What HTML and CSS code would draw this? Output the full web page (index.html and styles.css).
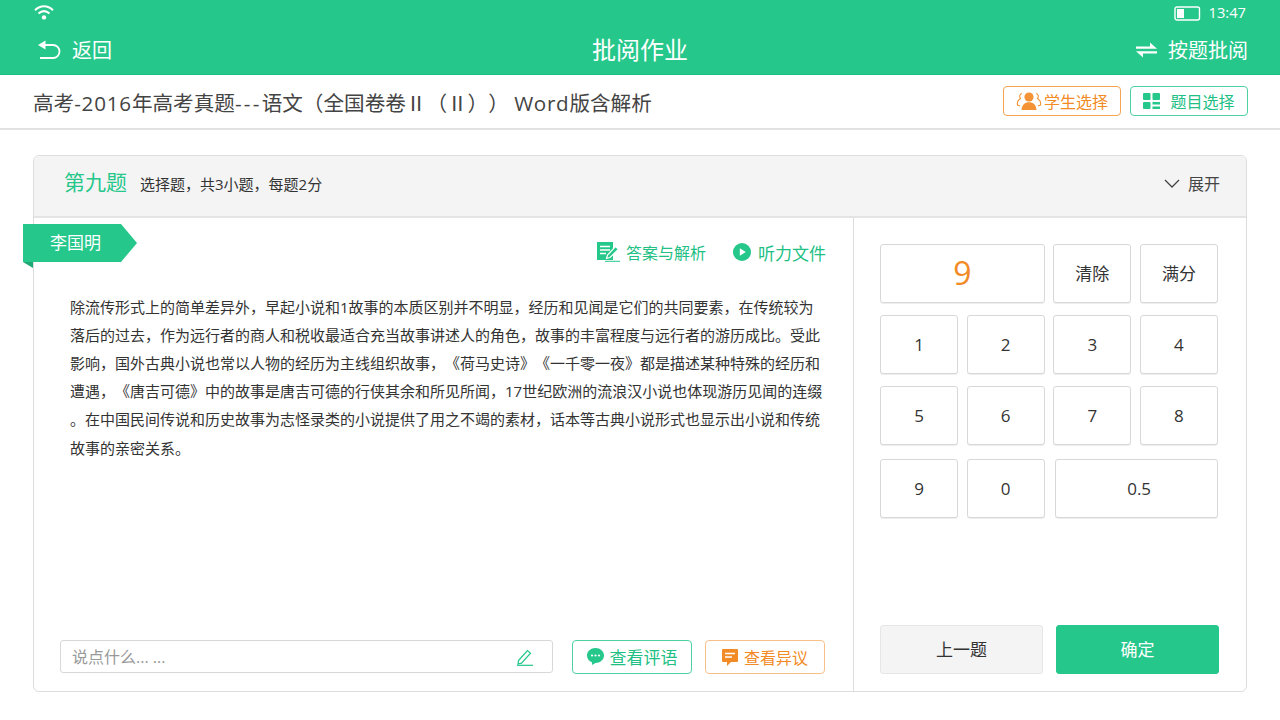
FILE: index.html
```html
<!DOCTYPE html>
<html lang="zh-CN">
<head>
<meta charset="utf-8">
<title>批阅作业</title>
<link rel="stylesheet" href="styles.css">
</head>
<body>
<header class="topbar">
  <div class="status">
    <svg class="wifi" viewBox="0 0 22 16" width="22" height="16"><path d="M2 6.200C7.500 1 14.500 1 20 6.200" fill="none" stroke="#fff" stroke-width="2"/><path d="M5.500 9.600C9 6.400 13 6.400 16.500 9.600" fill="none" stroke="#fff" stroke-width="2"/><circle cx="11" cy="13.400" r="2.200" fill="#fff"/></svg>
    <div class="status-right">
      <svg viewBox="0 0 27 15" width="27" height="15"><rect x="1" y="1" width="24.500" height="13" rx="2" fill="none" stroke="#fff" stroke-width="1.400"/><rect x="3" y="3" width="7" height="9" fill="#fff"/></svg>
      <span class="time">13:47</span>
    </div>
  </div>
  <div class="navrow">
    <div class="nav-left">
      <svg viewBox="0 0 24 19" width="24" height="19"><path d="M0 5 7.500.500v9z" fill="#fff"/><path d="M7 5h8a6.500 6.500 0 0 1 0 13H2" fill="none" stroke="#fff" stroke-width="1.800"/></svg>
      <span>返回</span>
    </div>
    <div class="nav-title">批阅作业</div>
    <div class="nav-right">
      <svg viewBox="0 0 21 16" width="21" height="16"><path d="M0 4.500h14V.500l7 6.300H0z" fill="#fff"/><path d="M21 9.200H0l7 6.300v-4h14z" fill="#fff"/></svg>
      <span>按题批阅</span>
    </div>
  </div>
</header>

<div class="subbar">
  <h1 class="paper">高考<span class="lat">-2016</span>年高考真题<span class="dash">---</span>语文（全国卷卷<span class="roman">Ⅱ</span>（<span class="roman">Ⅱ</span>）） <span class="word">Word</span>版含解析</h1>
  <div class="sub-actions">
    <button class="chip chip-orange">
      <svg viewBox="0 0 26 20" width="26" height="20"><circle cx="13" cy="6" r="4.600" fill="#f39336"/><path d="M5.500 19c.4-5.500 3.500-7.800 7.500-7.800s7.100 2.300 7.500 7.800z" fill="#f39336"/><path d="M6 2.500C3.500 3 3 6 4.500 7.500 2 9 1 11.500 1.500 14l2.500 1M20 2.500c2.500.5 3 3.500 1.500 5 2.500 1.500 3.500 4 3 6.500l-2.500 1" fill="none" stroke="#f39336" stroke-width="1.100"/></svg>
      <span>学生选择</span>
    </button>
    <button class="chip chip-green">
      <svg viewBox="0 0 17 16" width="17" height="16"><rect width="7.500" height="7" rx="1" fill="#25c78b"/><rect x="9.500" width="7.500" height="7" rx="1" fill="#25c78b"/><rect y="9" width="7.500" height="7" rx="1" fill="#25c78b"/><rect x="9.500" y="9" width="7.500" height="2.500" fill="#25c78b"/><rect x="9.500" y="13.500" width="7.500" height="2.500" fill="#25c78b"/></svg>
      <span>题目选择</span>
    </button>
  </div>
</div>

<main class="page">
  <section class="card">
    <div class="card-head">
      <strong class="q-no">第九题</strong>
      <span class="q-desc">选择题，共3小题，每题2分</span>
      <span class="expand">
        <svg viewBox="0 0 16 9" width="16" height="9"><path d="M1 1l7 7 7-7" fill="none" stroke="#444" stroke-width="1.300"/></svg>
        展开
      </span>
    </div>
    <div class="card-body">
      <div class="answer">
        <div class="ribbon">李国明</div>
        <div class="links">
          <a class="link link-doc">
            <svg viewBox="0 0 23 20" width="23" height="20"><path d="M0 0h16v18H0z" fill="#25c78b"/><path d="M3 4.500h10M3 8h10M3 11.500h6" stroke="#fff" stroke-width="1.500"/><path d="M9.500 16.500l1-3.500 8-8.500 3 2.800-8.500 8.200z" fill="#25c78b" stroke="#fff" stroke-width="1.200"/><path d="M8 19.300h15" stroke="#25c78b"/></svg>
            <span>答案与解析</span>
          </a>
          <a class="link link-audio">
            <svg viewBox="0 0 18 18" width="18" height="18"><circle cx="9" cy="9" r="9" fill="#25c78b"/><path d="M6.800 5.200 12.800 9l-6 3.800z" fill="#fff"/></svg>
            <span>听力文件</span>
          </a>
        </div>
        <p class="essay">除流传形式上的简单差异外，早起小说和1故事的本质区别并不明显，经历和见闻是它们的共同要素，在传统较为落后的过去，作为远行者的商人和税收最适合充当故事讲述人的角色，故事的丰富程度与远行者的游历成比。受此影响，国外古典小说也常以人物的经历为主线组织故事，《荷马史诗》《一千零一夜》都是描述某种特殊的经历和遭遇，《唐吉可德》中的故事是唐吉可德的行侠其余和所见所闻，17世纪欧洲的流浪汉小说也体现游历见闻的连缀。在中国民间传说和历史故事为志怪录类的小说提供了用之不竭的素材，话本等古典小说形式也显示出小说和传统故事的亲密关系。</p>
        <div class="comment-row">
          <div class="comment">
            <span class="placeholder">说点什么... ...</span>
            <svg viewBox="0 0 18 18" width="18" height="18"><path d="M2.500 12.500 11.500 2.500l3 2.700-9 10-3.500.8z" fill="none" stroke="#25c78b" stroke-width="1.200"/><path d="M1 17.300h16" stroke="#25c78b" stroke-width="1.200"/></svg>
          </div>
          <button class="chip tall chip-green-solid">
            <svg viewBox="0 0 17 17" width="17" height="17"><path d="M8.500 0C13.200 0 17 3.300 17 7.500S13.200 15 8.500 15L5 17v-2.700C2 13.200 0 10.600 0 7.500 0 3.300 3.800 0 8.500 0z" fill="#25c78b"/><circle cx="5" cy="7.500" r="1.100" fill="#fff"/><circle cx="8.500" cy="7.500" r="1.100" fill="#fff"/><circle cx="12" cy="7.500" r="1.100" fill="#fff"/></svg>
            <span>查看评语</span>
          </button>
          <button class="chip tall chip-orange-soft">
            <svg viewBox="0 0 16 17" width="16" height="17"><path d="M1 0h14a1 1 0 0 1 1 1v11a1 1 0 0 1-1 1H9l-4 4v-4H1a1 1 0 0 1-1-1V1a1 1 0 0 1 1-1z" fill="#f28a25"/><path d="M3 4.500h10M3 8h7" stroke="#fff" stroke-width="1.500"/></svg>
            <span>查看异议</span>
          </button>
        </div>
      </div>
      <aside class="scorer">
        <div class="keys">
          <div class="key score top">9</div>
          <button class="key top">清除</button>
          <button class="key top">满分</button>
          <button class="key">1</button>
          <button class="key">2</button>
          <button class="key">3</button>
          <button class="key">4</button>
          <button class="key">5</button>
          <button class="key">6</button>
          <button class="key">7</button>
          <button class="key">8</button>
          <button class="key low">9</button>
          <button class="key low">0</button>
          <button class="key low half">0.5</button>
        </div>
        <div class="step">
          <button class="prev">上一题</button>
          <button class="ok">确定</button>
        </div>
      </aside>
    </div>
  </section>
</main>
</body>
</html>
```
FILE: styles.css
```css
* { box-sizing: border-box; }
html, body { margin: 0; height: 720px; overflow: hidden; }
body { background: #fff; color: #333; font-family: "Open Sans", "Noto Sans CJK SC", sans-serif; text-spacing-trim: space-all; }
button { font: inherit; background: #fff; padding: 0; cursor: pointer; }
svg { display: block; flex: none; }

.topbar { height: 75px; background: #26c78b; border-bottom: 1px solid #1fbf83; color: #fff; }
.status { height: 25px; padding: 4px 34px 0 33px; display: flex; justify-content: space-between; align-items: flex-start; }
.status-right { display: flex; align-items: center; gap: 8px; }
.status-right svg { margin-top: 1px; }
.time { font-size: 14.700px; line-height: 17px; }
.navrow { height: 49px; padding: 0 32px; display: grid; grid-template-columns: 1fr auto 1fr; align-items: center; font-size: 20px; }
.nav-left { display: flex; align-items: center; gap: 10px; padding-left: 6px; }
.nav-title { font-size: 24px; padding-bottom: 2px; }
.nav-right { display: flex; align-items: center; justify-content: flex-end; gap: 11px; }

.subbar { height: 55px; border-bottom: 2px solid #e2e2e2; padding: 0 32px 2px 33px; display: flex; align-items: center; justify-content: space-between; }
.paper { margin: 3px 0 0; font-size: 20.600px; font-weight: 400; color: #444; white-space: nowrap; }
.lat { letter-spacing: .8px; }
.dash { letter-spacing: 2.300px; }
.word { letter-spacing: .7px; }
.roman { display: inline-block; width: 1em; text-align: center; }
.sub-actions { display: flex; gap: 9px; }
.chip { height: 30px; width: 118px; border-radius: 4px; display: flex; align-items: center; justify-content: center; font-size: 16px; gap: 2px; }
.chip-orange { border: 1px solid #f5a451; color: #f28a25; }
.chip-green { border: 1px solid #4fd0a0; color: #22bf85; gap: 10px; }

.page { padding: 25px 33px 0; }
.card { height: 537px; border: 1px solid #ddd; border-radius: 6px; display: flex; flex-direction: column; }
.card-head { height: 62px; flex: none; background: #f4f4f4; border-bottom: 2px solid #e4e4e4; border-radius: 5px 5px 0 0; padding: 0 26px 6px 30px; display: flex; align-items: center; }
.q-no { font-size: 21px; font-weight: 400; color: #25c78b; margin-top: -4px; }
.q-desc { font-size: 15px; margin-left: 13px; color: #333; }
.expand { margin-left: auto; display: flex; align-items: center; gap: 8px; font-size: 16px; color: #444; }

.card-body { flex: 1; display: flex; min-height: 0; }
.answer { position: relative; width: 820px; border-right: 1px solid #ddd; padding: 22px 27px 17px 36px; display: flex; flex-direction: column; }
.ribbon { position: absolute; left: -11px; top: 6px; width: 114px; height: 38px; padding-left: 27px; color: #fff; font-size: 17px; line-height: 38px; z-index: 0; }
.ribbon::before { content: ""; position: absolute; inset: 0; background: #26c78b; clip-path: polygon(0 0, 98px 0, 114px 50%, 98px 100%, 0 100%); z-index: -1; }
.ribbon::after { content: ""; position: absolute; left: 0; top: 38px; width: 10px; height: 6px; background: #1fa874; clip-path: polygon(0 0, 100% 0, 100% 100%); }
.links { display: flex; justify-content: flex-end; align-items: center; gap: 27px; height: 24px; }
.link { display: flex; align-items: center; color: #22bf85; }
.link-doc { font-size: 16px; gap: 6px; }
.link-audio { font-size: 17px; gap: 7px; }
.essay { margin: 28.600px 0 0; font-size: 15px; line-height: 28.200px; color: #333; line-break: anywhere; }
.comment-row { margin-top: auto; display: flex; align-items: stretch; margin-left: -10px; }
.comment { width: 493px; height: 33px; border: 1px solid #d8d8d8; border-radius: 3px; padding: 0 18px 0 11px; display: flex; align-items: center; justify-content: space-between; }
.placeholder { font-size: 16px; color: #999; padding-bottom: 2px; }
.tall { height: 34px; width: 120px; gap: 6px; font-size: 17px; }
.chip-green-solid { margin-left: 19px; border: 1px solid #4fd0a0; color: #22bf85; padding-bottom: 1px; }
.chip-orange-soft { margin-left: 13px; border: 1px solid #f7c08a; color: #f28a25; font-size: 16px; }

.scorer { flex: 1; padding: 26px 27px 17px 26px; display: flex; flex-direction: column; justify-content: space-between; }
.keys { display: grid; grid-template-columns: repeat(4, 78px); grid-template-rows: 59px 59px 59px 61px; gap: 12px 8.670px; }
.key { border: 1px solid #d8d8d8; border-radius: 3px; font-size: 17px; color: #333; display: flex; align-items: center; justify-content: center; box-shadow: 0 1px 0 #eee; }
.key.top { padding-bottom: 2px; }
.score { grid-column: span 2; font-size: 32px; color: #f28a25; }
.key.low { margin-top: 2px; }
.key.half { grid-column: span 2; margin-left: 2px; padding-left: 5px; }
.step { display: flex; justify-content: space-between; }
.prev, .ok { width: 163px; height: 49px; border-radius: 3px; font-size: 17px; border: 1px solid #e6e6e6; padding-bottom: 2px; }
.prev { background: #f4f4f4; color: #333; }
.ok { background: #26c78b; border-color: #26c78b; color: #fff; }
```
